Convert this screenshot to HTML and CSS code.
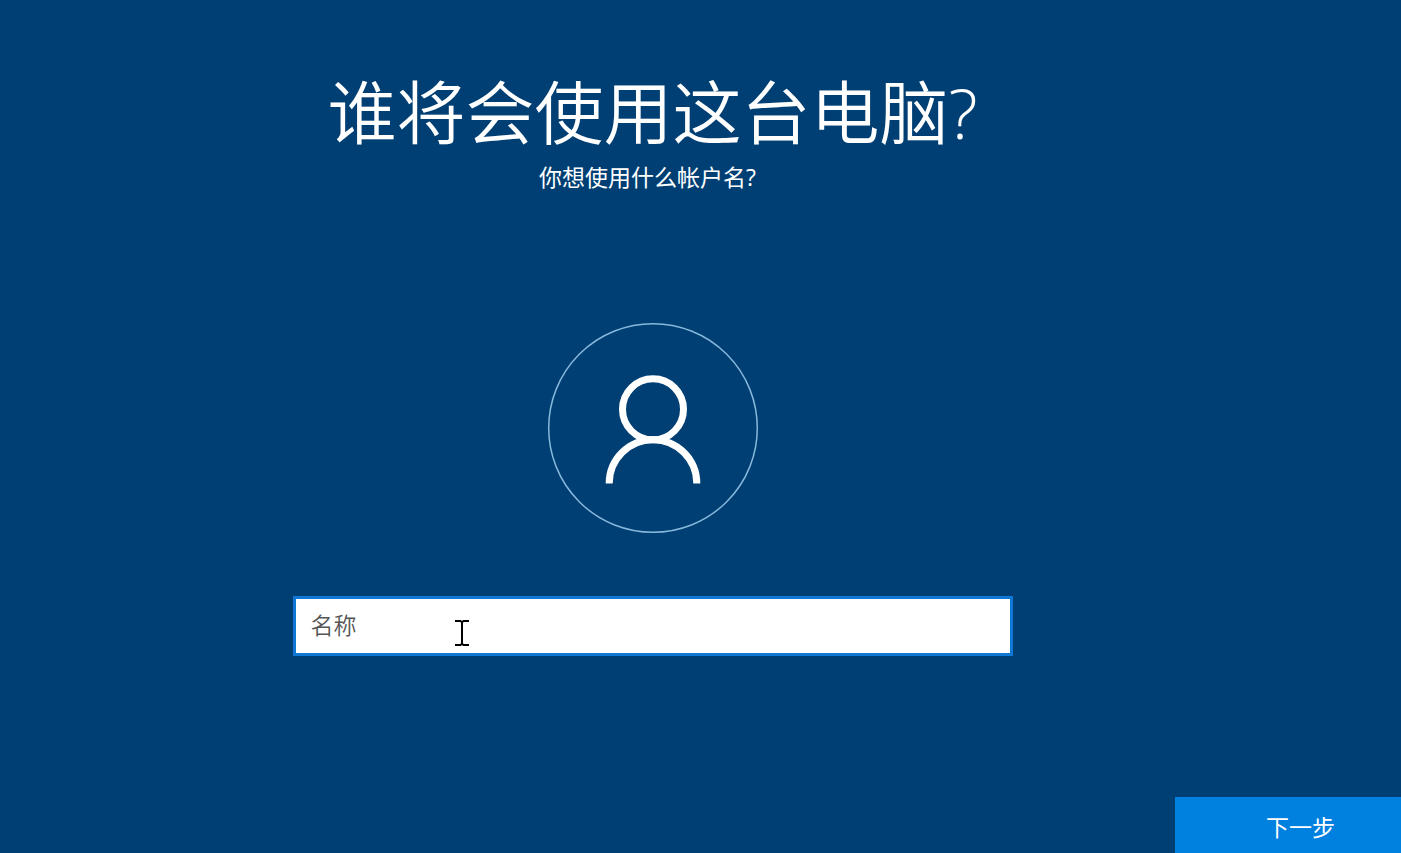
FILE: index.html
```html
<!DOCTYPE html>
<html lang="zh-CN">
<head>
<meta charset="utf-8">
<meta name="viewport" content="width=device-width, initial-scale=1">
<title>谁将会使用这台电脑?</title>
<link rel="stylesheet" href="styles.css">
</head>
<body>
<form class="setup">
  <main class="content">
    <h1 class="title">谁将会使用这台电脑<span class="mark">?</span></h1>
    <p class="subtitle">你想使用什么帐户名?</p>
    <svg class="avatar" viewBox="0 0 212 212" aria-hidden="true">
      <circle class="avatar-ring" cx="106" cy="106" r="104.3"/>
      <circle class="avatar-person" cx="106" cy="87.3" r="30.5"/>
      <path class="avatar-person" d="M62.2 161.5a43.8 43.8 0 0 1 87.6 0"/>
    </svg>
    <div class="field">
      <input class="name-input" type="text" placeholder="名称" aria-label="名称">
      <svg class="cursor" viewBox="0 0 14 26" aria-hidden="true">
        <path d="M0 1h5.5L7 2.2 8.5 1H14M0 25h5.5L7 23.8 8.5 25H14M7 2v22"/>
      </svg>
    </div>
  </main>
  <footer class="actions">
    <button class="next" type="button">下一步</button>
  </footer>
</form>
</body>
</html>
```
FILE: styles.css
```css
* {
  box-sizing: border-box;
}

body {
  margin: 0;
  background: #003f73;
  color: #fff;
  font-family: "Open Sans", "Noto Sans CJK SC", sans-serif;
}

.setup {
  display: flex;
  flex-direction: column;
  min-height: 100vh;
}

.content {
  flex: 1;
  display: flex;
  flex-direction: column;
  align-items: center;
  padding: 66px 96px 24px 0;
}

.title {
  margin: 0;
  font-size: 69px;
  font-weight: 350;
  line-height: 92px;
}

.mark {
  font-weight: 300;
}

.subtitle {
  margin: 0;
  padding-right: 10px;
  font-size: 23px;
  line-height: 38px;
}

.avatar {
  width: 212px;
  height: 212px;
  margin: 126px 0 62px;
  fill: none;
}

.avatar-ring {
  stroke: #86b8dc;
  stroke-width: 1.5;
}

.avatar-person {
  stroke: #fff;
  stroke-width: 7;
}

.field {
  position: relative;
  width: 100%;
  max-width: 720px;
}

.name-input {
  display: block;
  width: 100%;
  height: 60px;
  padding: 0 15px 2px;
  border: 3px solid #0f78d4;
  border-radius: 0;
  outline: 0;
  background: #fff;
  color: #000;
  font: 350 23px "Open Sans", "Noto Sans CJK SC", sans-serif;
}

.name-input::placeholder {
  color: #555;
  opacity: 1;
}

.cursor {
  position: absolute;
  left: 162px;
  top: 24px;
  width: 14px;
  height: 26px;
  fill: none;
  stroke: #000;
  stroke-width: 2;
  pointer-events: none;
}

.actions {
  display: flex;
  justify-content: flex-end;
}

.next {
  height: 56px;
  padding: 2px 66px 0 91px;
  border: 0;
  background: #0080df;
  color: #fff;
  font: 400 23px "Open Sans", "Noto Sans CJK SC", sans-serif;
}
```
